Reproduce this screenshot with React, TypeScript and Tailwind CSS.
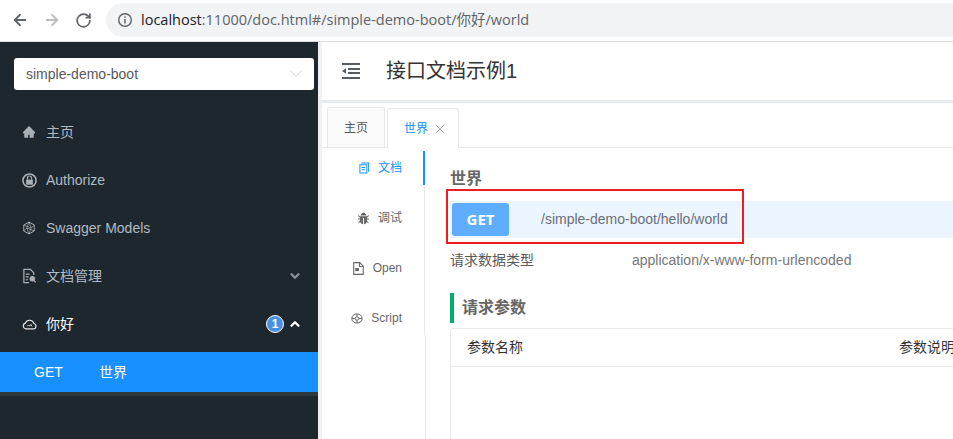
import { ReactNode } from "react";
import { ArrowLeft, ArrowRight, RotateCw, X, ChevronDown, ChevronUp } from "lucide-react";
import { AiFillHome, AiFillBug } from "react-icons/ai";

const sans = "font-['Liberation_Sans','Noto_Sans_CJK_SC',sans-serif]";

function LockIcon() {
  return (
    <svg width="15" height="15" viewBox="0 0 16 16" fill="none">
      <circle cx="8" cy="8" r="7" stroke="currentColor" strokeWidth="1.7" />
      <rect x="4.4" y="6.8" width="7.2" height="5.6" rx="0.6" fill="currentColor" />
      <path d="M5.8 7V5.4a2.2 2.2 0 0 1 4.4 0V7" stroke="currentColor" strokeWidth="1.3" />
    </svg>
  );
}

function ModelIcon() {
  return (
    <svg width="14" height="14" viewBox="0 0 16 16" fill="none" stroke="currentColor" strokeWidth="1.1">
      <path d="M8 1.2 14 4.6v6.8L8 14.8 2 11.4V4.6z" />
      <path d="M8 1.2 5.5 8 8 14.8 10.5 8zM2 4.6 10.5 8 14 4.6M2 11.4 5.5 8 14 11.4" strokeWidth="0.8" />
    </svg>
  );
}

function DocsIcon() {
  return (
    <svg width="15" height="16" viewBox="0 0 16 16" fill="none" stroke="currentColor" strokeWidth="1.3">
      <path d="M7.5 15H2V1h7l3.5 3.5V7" />
      <path d="M4 6h4M4 9h3M4 12h2.5" />
      <circle cx="11" cy="11" r="2.3" fill="currentColor" />
      <path d="m12.6 12.8 2 2" />
    </svg>
  );
}

function CloudIcon() {
  return (
    <svg width="15" height="11" viewBox="0 0 16 11" fill="none" stroke="currentColor" strokeWidth="1.2">
      <path d="M4 10.2h8.2a2.9 2.9 0 0 0 .5-5.7A4.8 4.8 0 0 0 3.6 4 3.2 3.2 0 0 0 4 10.2z" />
      <path d="M5.5 7.5 7 6l1 1.2L9.5 5.5l1.2 2" strokeWidth="1" />
    </svg>
  );
}

function NoteIcon() {
  return (
    <svg width="11" height="12" viewBox="0 0 12 13" fill="none" stroke="currentColor" strokeWidth="1.1">
      <path d="M2.5 1h8v9.5M1 3h7.5v9H1z" />
      <path d="M3 6h3.5M3 8.5h3.5" />
    </svg>
  );
}

function FileIcon() {
  return (
    <svg width="11" height="13" viewBox="0 0 10 12" fill="none" stroke="currentColor" strokeWidth="1" className="mr-[1px]">
      <path d="M.6.6h5.6l3.2 3.2v7.6H.6z" />
      <path d="M5.8.8v3.4h3.4" />
      <rect x="2" y="5.6" width="3.4" height="2.8" fill="currentColor" stroke="none" />
    </svg>
  );
}

function ScriptIcon() {
  return (
    <svg width="12" height="11" viewBox="0 0 12 11" fill="none" stroke="currentColor" strokeWidth="1">
      <ellipse cx="6" cy="5.5" rx="5.2" ry="4.6" />
      <circle cx="6" cy="5.5" r="1.8" />
      <path d="M1 5.5h3M8 5.5h3M6 1v2.5M6 7.5V10" />
    </svg>
  );
}

function MenuFoldIcon() {
  return (
    <svg width="18" height="16" viewBox="0 0 18 16" fill="#545c64">
      <rect width="18" height="2" y="0" />
      <rect width="12" height="2" x="6" y="5" />
      <rect width="12" height="2" x="6" y="9" />
      <rect width="18" height="2" y="14" />
      <path d="M0 8 4 5.2v5.6z" />
    </svg>
  );
}

function NavItem({ icon, label, active, right }: { icon: ReactNode; label: string; active?: boolean; right?: ReactNode }) {
  return (
    <div className={`flex h-12 items-center pl-[22px] pr-[16px] text-[14px] ${active ? "text-white" : "text-[#b0bac3]"}`}>
      <span className={`flex w-[24px] items-center ${active ? "text-[#e8e8e8]" : "text-[#a9b0b5]"}`}>{icon}</span>
      <span className="flex-1">{label}</span>
      {right}
    </div>
  );
}

function SideTab({ icon, label, active }: { icon: ReactNode; label: string; active?: boolean }) {
  return (
    <div className={`-mr-[1px] flex h-[34px] items-center justify-end gap-[8px] border-r-2 pr-[21px] text-[12px] ${active ? "border-[#1890ff] text-[#1890ff]" : "border-transparent text-[#666]"}`}>
      {icon}
      <span>{label}</span>
    </div>
  );
}

export default function App() {
  return (
    <div className={`flex h-[439px] w-[953px] flex-col overflow-hidden bg-white ${sans}`}>
      {/* browser toolbar */}
      <div className="flex h-[42px] shrink-0 items-start border-b border-[#dcdcdc]">
        <div className="flex h-[40px] w-[106px] items-center pl-[11px]">
          <ArrowLeft size={18} color="#5f6368" strokeWidth={2.4} />
          <ArrowRight size={18} color="#bcbec1" strokeWidth={2.4} className="ml-[14px]" />
          <RotateCw size={17} color="#5f6368" strokeWidth={2.4} className="ml-[14px]" />
        </div>
        <div className="mt-[3px] flex h-[34px] flex-1 items-center rounded-l-[17px] bg-[#f1f3f4] pl-[11px] font-['Open_Sans','Noto_Sans_CJK_SC',sans-serif] text-[14.5px] text-[#5f6368]">
          <svg width="16" height="16" viewBox="0 0 16 16" fill="none" stroke="#5f6368" strokeWidth="1.4">
            <circle cx="8" cy="8" r="6.3" />
            <path d="M8 7v4.5M8 4.3v1.5" />
          </svg>
          <span className="ml-[8px]">
            <span className="text-[#202124]">localhost</span>:11000/doc.html#/simple-demo-boot/你好/world
          </span>
        </div>
      </div>

      <div className="flex min-h-0 flex-1">
        {/* sidebar */}
        <aside className="flex w-[318px] shrink-0 flex-col bg-[#1f272e]">
          <div className="flex h-[66px] shrink-0 items-start pl-[14px] pr-[4px] pt-[16px]">
            <div className="flex h-[32px] w-[300px] items-center justify-between rounded-[3px] bg-white pl-[12px] pr-[8px] text-[14px] text-[#595959]">
              simple-demo-boot
              <ChevronDown size={20} color="#c4c4c4" strokeWidth={1} />
            </div>
          </div>
          <NavItem icon={<AiFillHome size={14} />} label="主页" />
          <NavItem icon={<LockIcon />} label="Authorize" />
          <NavItem icon={<ModelIcon />} label="Swagger Models" />
          <NavItem icon={<DocsIcon />} label="文档管理" right={<ChevronDown size={14} color="#8a9298" strokeWidth={4} />} />
          <NavItem
            icon={<CloudIcon />}
            label="你好"
            active
            right={
              <span className="flex items-center gap-[4px]">
                <span className="flex h-[18px] w-[18px] items-center justify-center rounded-full border border-white bg-[#4a90e2] text-[12px] font-bold text-white">1</span>
                <ChevronUp size={14} color="#fff" strokeWidth={4} />
              </span>
            }
          />
          <div className="mt-[4px] flex h-[40px] items-center bg-[#1890ff] pl-[34px] text-[14px] text-white">
            <span className="w-[65px]">GET</span>
            <span>世界</span>
          </div>
          <div className="h-[4px] bg-[#2d373c]" />
        </aside>

        {/* main */}
        <main className="flex min-w-0 flex-1 flex-col border-l-[4px] border-[#f0f0f5]">
          <div className="-ml-[2px] flex h-[61px] shrink-0 items-center border-b-[3px] border-[#e8ebef] pl-[22px]">
            <MenuFoldIcon />
            <span className="ml-[26px] text-[20px] text-[#333]">接口文档示例1</span>
          </div>

          {/* tabs */}
          <div className="mt-[5px] flex h-[40px] shrink-0 items-end border-b border-[#e8e8e8] pl-[5px] text-[12px]">
            <div className="flex h-[40px] w-[58px] items-center justify-center rounded-t-[3px] border border-b-0 border-[#e8e8e8] bg-[#fafafa] text-[#595959]">主页</div>
            <div className="relative top-px ml-[2px] flex h-[40px] w-[72px] items-center gap-[5px] rounded-t-[3px] border border-b-0 border-[#e8e8e8] bg-white pl-[16px] text-[#1890ff]">
              世界
              <X size={14} color="#8c8c8c" strokeWidth={1.3} />
            </div>
          </div>

          <div className="flex min-h-0 flex-1">
            <div className="flex w-[104px] shrink-0 flex-col pt-[3px]">
              <div className="mr-[1px] flex flex-col gap-[16px] border-r border-[#e8e8e8]">
                <SideTab icon={<NoteIcon />} label="文档" active />
                <SideTab icon={<AiFillBug size={13} />} label="调试" />
                <SideTab icon={<FileIcon />} label="Open" />
                <SideTab icon={<ScriptIcon />} label="Script" />
              </div>
              <div className="flex-1 border-r border-[#e8e8e8]" />
            </div>

            <div className="relative min-w-0 flex-1 pl-[24px] pt-[21px]">
              <h2 className="text-[16px] font-bold leading-[20px] text-[#666]">世界</h2>
              <div className="-mr-[10px] mt-[12px] flex h-[37px] items-center bg-[#ebf5ff] pl-[2px]">
                <span className="flex h-[33px] w-[57px] items-center justify-center rounded-[3px] bg-[#5fadff] font-['Open_Sans',sans-serif] text-[15px] font-bold text-white">GET</span>
                <span className="ml-[32px] text-[14px] text-[#6b6f76]">/simple-demo-boot/hello/world</span>
              </div>
              {/* annotation drawn over the path row */}
              <div className="absolute left-[20px] top-[41px] h-[55px] w-[298px] border-2 border-[#ed1c24]" />

              <div className="mt-[12px] flex h-[20px] items-center text-[14px]">
                <span className="w-[182px] text-[#595959]">请求数据类型</span>
                <span className="text-[#777]">application/x-www-form-urlencoded</span>
              </div>

              <div className="mt-[23px] flex h-[30px] items-center border-l-4 border-[#00ab6e] pl-[8px] text-[16px] font-bold text-[#666]">请求参数</div>

              <div className="-mr-[10px] mt-[5px] h-[120px] rounded-tl-[4px] border-l border-t border-[#e8e8e8]">
                <div className="flex h-[38px] items-center justify-between border-b border-[#e8e8e8] pl-[16px] text-[14px] text-[#333]">
                  <span>参数名称</span>
                  <span className="w-[64px] whitespace-nowrap">参数说明</span>
                </div>
              </div>
            </div>
          </div>
        </main>
      </div>
    </div>
  );
}
